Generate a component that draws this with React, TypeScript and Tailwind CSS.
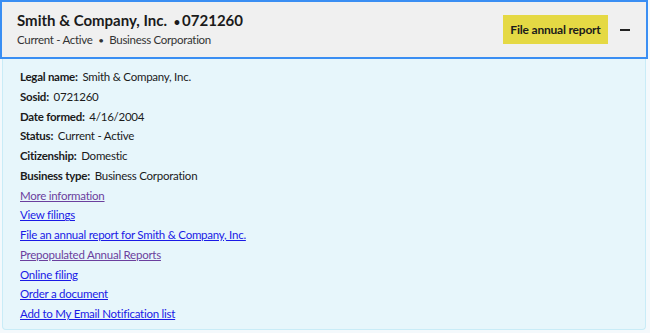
import React from 'react'

const facts: [string, string][] = [
  ['Legal name:', 'Smith & Company, Inc.'],
  ['Sosid:', '0721260'],
  ['Date formed:', '4/16/2004'],
  ['Status:', 'Current - Active'],
  ['Citizenship:', 'Domestic'],
  ['Business type:', 'Business Corporation'],
]

const links: [string, boolean][] = [
  ['More information', true],
  ['View filings', false],
  ['File an annual report for Smith & Company, Inc.', false],
  ['Prepopulated Annual Reports', true],
  ['Online filing', false],
  ['Order a document', false],
  ['Add to My Email Notification list', false],
]

export default function App() {
  return (
    <div className="h-[333px] w-[650px] bg-[#f4f9fc]" style={{ fontFamily: 'Lato, "Noto Sans", sans-serif' }}>
      <div className="w-[648px]">
        <div className="flex h-[59px] items-center justify-between border-2 border-[#3a8ef3] bg-[#f0f0f0] pb-[2px] pl-[15px] pr-[16px]">
          <div>
            <div className="text-[15px] font-bold leading-5 text-[#1b1b1b]">
              Smith &amp; Company, Inc. <span className="ml-[3px] text-[11px]">•</span>
              <span className="ml-[2px]">0721260</span>
            </div>
            <div className="text-[11.5px] leading-4 tracking-[-0.3px] text-[#333]">
              Current - Active <span className="mx-[3px] text-[10px]">•</span> Business Corporation
            </div>
          </div>
          <div className="flex items-center pt-[2px]">
            <button className="h-[29px] w-[105px] bg-[#e5d944] text-[12px] font-bold tracking-[-0.2px] text-[#1b1b1b]">
              File annual report
            </button>
            <span className="ml-[12px] h-[2px] w-[10px] bg-[#222]" />
          </div>
        </div>
        <div className="mx-[2px] h-[271px] rounded-b border border-t-0 border-[#c9ecf7] bg-[#e7f6fb] pl-[17px] pt-[8px]">
          {facts.map(([k, v]) => (
            <div key={k} className="h-[19.75px] text-[11.5px] leading-[19.75px] tracking-[-0.25px] text-[#1b1b1b]">
              <span className="font-bold">{k}</span> <span className="ml-[2px]">{v}</span>
            </div>
          ))}
          {links.map(([t, visited]) => (
            <div key={t} className="h-[19.75px] text-[11.5px] leading-[19.75px] tracking-[-0.25px]">
              <a href="#" className={visited ? 'text-[#6b3f9e] underline' : 'text-[#1a1ae6] underline'}>
                {t}
              </a>
            </div>
          ))}
        </div>
      </div>
    </div>
  )
}
